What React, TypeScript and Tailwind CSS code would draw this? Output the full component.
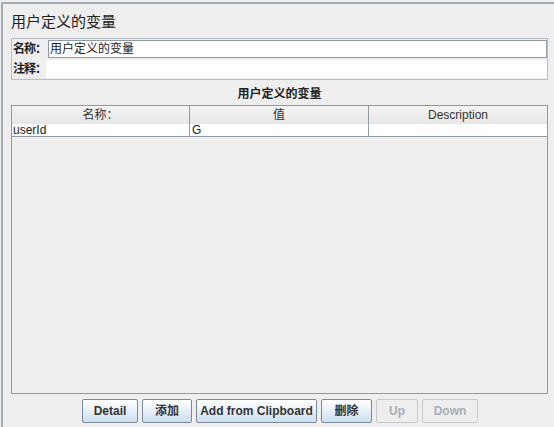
import React from "react";

const cjk = { fontFamily: '"Liberation Sans", "Noto Sans CJK SC", sans-serif' };

function Btn({ label, w, disabled }: { label: string; w: string; disabled?: boolean }) {
  return (
    <button
      className={
        "h-[24px] text-[12px] font-bold flex items-center justify-center rounded-[2px] shrink-0 " +
        w +
        (disabled
          ? " border border-[#c3c9cf] text-[#a8aeb5] bg-[#eeeeee]"
          : " border border-[#7a8a99] text-[#333333] bg-gradient-to-b from-[#ffffff] to-[#cddff0]")
      }
    >
      {label}
    </button>
  );
}

export default function App() {
  const cols = ["名称：", "值", "Description"];
  return (
    <div className="w-[554px] h-[427px] bg-[#eeeeee] overflow-hidden pt-[2px] pl-[1px]" style={cjk}>
      <div className="h-full border-t-2 border-l-2 border-[#a3adb8] pl-[8px] pr-[6px]">
        <div className="h-[30px] flex items-end pb-[1px] text-[15px] text-[#222222]">用户定义的变量</div>
        <div className="mt-[4px] border border-[#b8bec4] h-[42px] flex flex-col">
          <div className="flex items-center h-[20px] pl-[1px]">
            <span className="text-[12px] font-bold w-[35px] shrink-0 whitespace-nowrap tracking-[-1px] text-[#222]">名称：</span>
            <div className="flex-1 h-[18px] bg-white border border-[#8e9aa6] text-[12px] leading-[16px] pl-[1px] text-[#222]">
              用户定义的变量
            </div>
          </div>
          <div className="flex items-center h-[20px] pl-[1px]">
            <span className="text-[12px] font-bold w-[33px] shrink-0 whitespace-nowrap tracking-[-1px] text-[#222]">注释：</span>
            <div className="flex-1 h-[18px] bg-white" />
          </div>
        </div>
        <div className="h-[25px] flex items-center justify-center text-[12px] font-bold text-[#222] pt-[2px]">
          用户定义的变量
        </div>
        <div className="border border-[#8e9aa6] h-[289px] flex flex-col bg-[#eeeeee]">
          <div className="grid grid-cols-[178px_179px_1fr] h-[18px] border-b border-[#8e9aa6]">
            {cols.map((c, i) => (
              <div
                key={c}
                className={
                  "flex items-center justify-center text-[12px] text-[#333] bg-gradient-to-b from-[#f4f4f4] to-[#e6e6e6]" +
                  (i < 2 ? " border-r border-[#8e9aa6]" : "")
                }
              >
                {c}
              </div>
            ))}
          </div>
          <div className="grid grid-cols-[178px_179px_1fr] h-[13px] bg-white border-b border-[#8e9aa6]">
            <div className="text-[12px] leading-[12px] pl-[1px] border-r border-[#8e9aa6] text-[#222]">userId</div>
            <div className="text-[12px] leading-[12px] pl-[2px] border-r border-[#8e9aa6] text-[#222]">G</div>
            <div />
          </div>
        </div>
        <div className="flex gap-[4px] mt-[5px] pl-[71px]">
          <Btn label="Detail" w="w-[56px]" />
          <Btn label="添加" w="w-[50px]" />
          <Btn label="Add from Clipboard" w="w-[121px]" />
          <Btn label="删除" w="w-[51px]" />
          <Btn label="Up" w="w-[42px]" disabled />
          <Btn label="Down" w="w-[56px]" disabled />
        </div>
      </div>
    </div>
  );
}
